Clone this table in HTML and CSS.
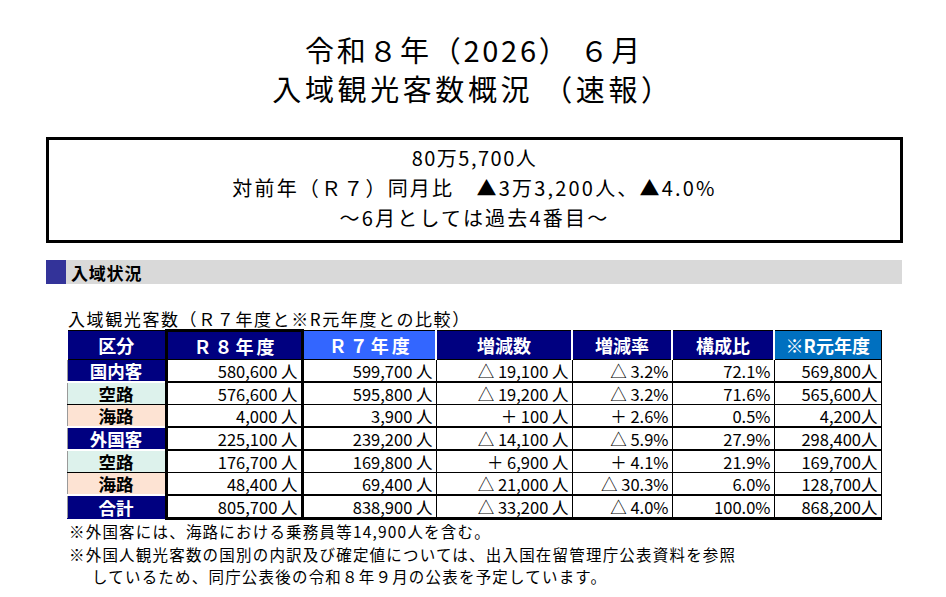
FILE: index.html
```html
<!DOCTYPE html>
<html lang="ja">
<head>
<meta charset="utf-8">
<link rel="stylesheet" href="styles.css">
</head>
<body>
<div class="page">
  <header class="title">
    <div class="title-line1">令和８年（2026） ６月</div>
    <div class="title-line2">入域観光客数概況 （速報）</div>
  </header>

  <section class="summary">
    <div class="sum-line">80万5,700人</div>
    <div class="sum-line">対前年（Ｒ７）同月比　▲3万3,200人、▲4.0%</div>
    <div class="sum-line">～6月としては過去4番目～</div>
  </section>

  <div class="section-head">
    <span class="section-mark"></span>
    <span class="section-text">入域状況</span>
  </div>

  <div class="caption">入域観光客数（Ｒ７年度と※R元年度との比較）</div>

  <table class="stats">
    <colgroup>
      <col class="w-cat">
      <col class="w-r8">
      <col class="w-r7">
      <col class="w-diff">
      <col class="w-rate">
      <col class="w-share">
      <col class="w-r1">
    </colgroup>
    <thead>
      <tr>
        <th>区分</th>
        <th class="c-r8 spaced">Ｒ８年度</th>
        <th class="spaced h-r7">Ｒ７年度</th>
        <th>増減数</th>
        <th>増減率</th>
        <th>構成比</th>
        <th class="h-r1">※R元年度</th>
      </tr>
    </thead>
    <tbody>
      <tr class="sep">
        <td class="cat navy">国内客</td>
        <td class="c-r8">580,600 人</td>
        <td>599,700 人</td>
        <td>△ 19,100 人</td>
        <td>△ 3.2%</td>
        <td>72.1%</td>
        <td>569,800人</td>
      </tr>
      <tr>
        <td class="cat mint">空路</td>
        <td class="c-r8">576,600 人</td>
        <td>595,800 人</td>
        <td>△ 19,200 人</td>
        <td>△ 3.2%</td>
        <td>71.6%</td>
        <td>565,600人</td>
      </tr>
      <tr class="sep">
        <td class="cat peach">海路</td>
        <td class="c-r8">4,000 人</td>
        <td>3,900 人</td>
        <td>＋ 100 人</td>
        <td>＋ 2.6%</td>
        <td>0.5%</td>
        <td>4,200人</td>
      </tr>
      <tr class="sep">
        <td class="cat navy">外国客</td>
        <td class="c-r8">225,100 人</td>
        <td>239,200 人</td>
        <td>△ 14,100 人</td>
        <td>△ 5.9%</td>
        <td>27.9%</td>
        <td>298,400人</td>
      </tr>
      <tr>
        <td class="cat mint">空路</td>
        <td class="c-r8">176,700 人</td>
        <td>169,800 人</td>
        <td>＋ 6,900 人</td>
        <td>＋ 4.1%</td>
        <td>21.9%</td>
        <td>169,700人</td>
      </tr>
      <tr class="sep">
        <td class="cat peach">海路</td>
        <td class="c-r8">48,400 人</td>
        <td>69,400 人</td>
        <td>△ 21,000 人</td>
        <td>△ 30.3%</td>
        <td>6.0%</td>
        <td>128,700人</td>
      </tr>
      <tr class="last">
        <td class="cat navy">合計</td>
        <td class="c-r8">805,700 人</td>
        <td>838,900 人</td>
        <td>△ 33,200 人</td>
        <td>△ 4.0%</td>
        <td>100.0%</td>
        <td>868,200人</td>
      </tr>
    </tbody>
  </table>

  <div class="notes">
    <p class="note">※外国客には、海路における乗務員等14,900人を含む。</p>
    <p class="note">※外国人観光客数の国別の内訳及び確定値については、出入国在留管理庁公表資料を参照</p>
    <p class="note indent">しているため、同庁公表後の令和８年９月の公表を予定しています。</p>
  </div>
</div>
</body>
</html>
```

FILE: styles.css
```css
html, body {
  margin: 0;
  padding: 0;
  background: #ffffff;
}

body {
  font-family: "Noto Sans CJK JP", "Noto Sans", sans-serif;
  color: #000000;
}

.page {
  width: 946px;
  display: flex;
  flex-direction: column;
}

.title {
  display: flex;
  flex-direction: column;
  align-items: center;
  padding-top: 30px;
  font-size: 29px;
  line-height: 39px;
}

.title-line1 {
  letter-spacing: 2.7px;
  padding-left: 2px;
}

.title-line2 {
  letter-spacing: 3.6px;
}

.summary {
  margin: 29px 43px 0 46px;
  border: 3px solid #000;
  height: 97px;
  display: flex;
  flex-direction: column;
  align-items: center;
  padding-top: 3px;
  font-size: 20px;
  line-height: 30px;
}

.sum-line {
  letter-spacing: 2.2px;
}

.sum-line:first-child {
  letter-spacing: 1.5px;
}

.section-head {
  margin: 17px 44px 0 46px;
  height: 24px;
  background: #d9d9d9;
  display: flex;
  align-items: center;
}

.section-mark {
  width: 20px;
  height: 24px;
  background: #333399;
}

.section-text {
  margin-left: 5px;
  font-size: 17px;
  font-weight: bold;
  letter-spacing: 0.8px;
}

.caption {
  margin: 25px 0 0 68px;
  font-size: 17px;
  line-height: 20px;
  letter-spacing: 1.6px;
}

.stats {
  margin: 0 0 0 66px;
  border-collapse: collapse;
  table-layout: fixed;
  width: 814px;
  font-size: 16.5px;
}

.w-cat { width: 99px; }
.w-r8 { width: 136px; }
.w-r7 { width: 134px; }
.w-diff { width: 136px; }
.w-rate { width: 100px; }
.w-share { width: 102px; }
.w-r1 { width: 107px; }

.stats th {
  height: 27px;
  padding: 0;
  background: #000080;
  color: #ffffff;
  font-weight: bold;
  font-size: 18px;
  line-height: 22px;
  text-align: center;
  border: 1px solid #000;
  border-left: 2px solid #ffffff;
  border-right: 2px solid #ffffff;
}

.stats th.h-r7 {
  background: #3366ff;
}

.stats th.h-r1 {
  background: #0070c0;
  border-right: 1px solid #000;
}

.stats th.spaced {
  letter-spacing: 3px;
  padding-left: 3px;
}

.stats td {
  height: 21px;
  padding: 0 3px 0 0;
  text-align: right;
  line-height: 20px;
  border: 1px solid #000;
  white-space: nowrap;
}

.stats tr.sep td {
  border-bottom: 2px solid #000;
}

.stats tr.last td {
  border-bottom: 3px solid #000;
}

.stats th.c-r8,
.stats td.c-r8 {
  border-left: 3px solid #000;
  border-right: 3px solid #000;
}

.stats th.c-r8 {
  border-top: 3px solid #000;
}

.stats td.cat {
  text-align: center;
  font-weight: bold;
  font-size: 17.5px;
  line-height: 19px;
  padding: 0;
  border-left: 1px solid #9a9a9a;
  border-top: 1px solid #ffffff;
}

.stats tr.sep td.cat {
  border-bottom-color: #ffffff;
}

.stats tr.last td.cat {
  border-bottom: 1px solid #000080;
}

.navy {
  background: #000080;
  color: #ffffff;
}

.mint {
  background: #ddf2ec;
}

.peach {
  background: #fde3d3;
}

.notes {
  margin: 0 0 0 69px;
  font-size: 15.5px;
  line-height: 22.5px;
  letter-spacing: 1.2px;
}

.note {
  margin: 0;
}

.note.indent {
  padding-left: 23px;
}
```
